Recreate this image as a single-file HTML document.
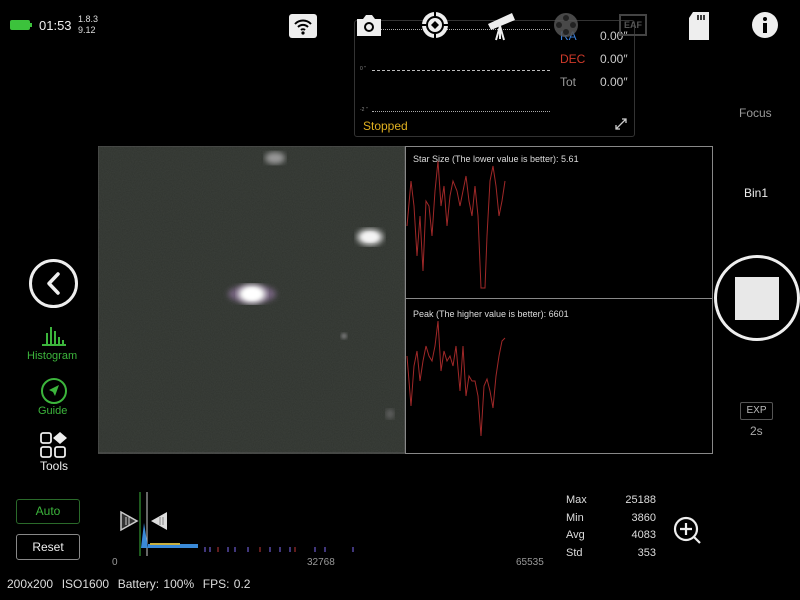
<!DOCTYPE html>
<html><head><meta charset="utf-8"><style>
*{margin:0;padding:0;box-sizing:border-box}
body{width:800px;height:600px;background:#000;overflow:hidden;position:relative;font-family:"Liberation Sans",sans-serif;color:#ddd}
.a{position:absolute}
.t{font-size:12px}
</style></head><body>
<div class="a" style="left:10px;top:20px;width:20px;height:10px;background:#3cc23c;border-radius:2px"></div>
<div class="a" style="left:30px;top:23px;width:2px;height:4px;background:#3cc23c"></div>
<div class="a" style="left:39px;top:18px;font-size:13px;color:#eee">01:53</div>
<div class="a" style="left:78px;top:14px;font-size:9px;line-height:11px;color:#ddd">1.8.3<br>9.12</div>

<div class="a" style="left:354px;top:20px;width:281px;height:117px;border:1px solid #333;border-radius:3px"></div>
<div class="a" style="left:372px;top:29px;width:178px;border-top:1px dotted #aaa"></div>
<div class="a" style="left:360px;top:66px;font-size:5px;color:#888">0 "</div>
<div class="a" style="left:372px;top:70px;width:178px;border-top:1px dashed #bbb"></div>
<div class="a" style="left:360px;top:107px;font-size:5px;color:#888">-2 "</div>
<div class="a" style="left:372px;top:111px;width:178px;border-top:1px dotted #aaa"></div>
<div class="a t" style="left:560px;top:52px;color:#d03a2a">DEC</div>
<div class="a t" style="left:560px;top:75px;color:#999">Tot</div>
<div class="a t" style="left:600px;top:29px;color:#ccc">0.00″</div>
<div class="a t" style="left:600px;top:52px;color:#ccc">0.00″</div>
<div class="a t" style="left:600px;top:75px;color:#ccc">0.00″</div>
<div class="a t" style="left:363px;top:119px;color:#e0b020">Stopped</div>
<svg class="a" style="left:614px;top:117px" width="14" height="14"><path d="M2 12L12 2M8 2h4v4M2 8v4h4" stroke="#ccc" stroke-width="1.3" fill="none"/></svg>

<svg class="a" style="left:289px;top:14px" width="28" height="24"><rect x="0" y="0" width="28" height="24" rx="3" fill="#eee"/><path d="M6 10a11 11 0 0 1 16 0M9 13a7 7 0 0 1 10 0M12 16a3 3 0 0 1 4 0" stroke="#000" stroke-width="2" fill="none"/><circle cx="14" cy="19" r="1.6"/></svg>
<svg class="a" style="left:355px;top:12px" width="28" height="26"><path d="M2 7h6l3-4h6l3 4h6v17H2z" fill="#eee"/><circle cx="14" cy="15" r="5" fill="#000"/><circle cx="14" cy="15" r="3" fill="#eee"/></svg>
<svg class="a" style="left:421px;top:11px" width="28" height="28"><circle cx="14" cy="14" r="13" fill="#eee"/><circle cx="14" cy="14" r="8" fill="none" stroke="#000" stroke-width="2"/><path d="M14 0v6M14 22v6M0 14h6M22 14h6" stroke="#000" stroke-width="2"/><path d="M14 10l4 4-4 4-4-4z" fill="#000"/></svg>
<svg class="a" style="left:484px;top:10px" width="34" height="32"><path d="M4 14L28 3l3 7-24 10z" fill="#eee"/><path d="M16 16l-4 14M16 16l4 14M16 16v13" stroke="#eee" stroke-width="2"/></svg>
<div class="a t" style="left:560px;top:29px;color:#3a7fd8">RA</div>
<svg class="a" style="left:553px;top:12px" width="26" height="26"><circle cx="13" cy="13" r="12" fill="#555" opacity=".85"/><circle cx="13" cy="6" r="3" fill="#222"/><circle cx="13" cy="20" r="3" fill="#222"/><circle cx="6" cy="13" r="3" fill="#222"/><circle cx="20" cy="13" r="3" fill="#222"/></svg>
<div class="a" style="left:619px;top:14px;width:28px;height:22px;border:2px solid #444;font-size:9px;color:#555;text-align:center;line-height:18px;font-weight:bold">EAF</div>
<svg class="a" style="left:689px;top:12px" width="22" height="28"><path d="M4 0h16v28H0V6z" fill="#eee"/><path d="M9 3v5M12 3v5M15 3v5" stroke="#000" stroke-width="1.5"/></svg>
<svg class="a" style="left:752px;top:12px" width="26" height="26"><circle cx="13" cy="13" r="13" fill="#eee"/><circle cx="13" cy="7" r="2" fill="#000"/><rect x="11" y="11" width="4" height="10" fill="#000"/></svg>

<div class="a" style="left:739px;top:106px;font-size:12px;color:#999">Focus</div>
<div class="a" style="left:744px;top:186px;font-size:12px;color:#eee">Bin1</div>

<svg class="a" style="left:98px;top:146px" width="308" height="308">
<filter id="n"><feTurbulence type="fractalNoise" baseFrequency="0.9" numOctaves="2" seed="3"/><feColorMatrix values="0 0 0 0 .15 0 0 0 0 .17 0 0 0 0 .15 0 0 0 .5 0"/></filter>
<filter id="b"><feGaussianBlur stdDeviation="3"/></filter>
<filter id="b2"><feGaussianBlur stdDeviation="1.5"/></filter>
<rect width="308" height="308" fill="#30342f"/>
<rect width="308" height="308" filter="url(#n)" opacity=".4"/>
<ellipse cx="154" cy="148" rx="24" ry="9" fill="#a080b0" filter="url(#b)" opacity=".6"/>
<ellipse cx="154" cy="148" rx="14" ry="9" fill="#eee" filter="url(#b)"/>
<ellipse cx="154" cy="148" rx="9" ry="6" fill="#fff" filter="url(#b2)"/>
<ellipse cx="272" cy="91" rx="13" ry="8" fill="#ddd" filter="url(#b)"/>
<ellipse cx="272" cy="91" rx="8" ry="5" fill="#f4f4f4" filter="url(#b2)"/>
<ellipse cx="177" cy="12" rx="10" ry="6" fill="#999" filter="url(#b)"/>
<ellipse cx="246" cy="190" rx="3" ry="3" fill="#777" filter="url(#b2)"/>
<ellipse cx="292" cy="268" rx="4" ry="5" fill="#666" filter="url(#b)"/>
<rect x="0" y="0" width="307" height="307" fill="none" stroke="#555"/>
</svg>
<div class="a" style="left:405px;top:146px;width:308px;height:308px;border:1px solid #888;background:#000"></div>
<div class="a" style="left:405px;top:298px;width:308px;border-top:1px solid #888"></div>
<div class="a" style="left:413px;top:154px;font-size:9px;color:#ddd">Star Size (The lower value is better): 5.61</div>
<div class="a" style="left:413px;top:309px;font-size:9px;color:#ddd">Peak (The higher value is better): 6601</div>
<svg class="a" style="left:405px;top:146px" width="120" height="308"><polyline fill="none" stroke="#a02828" stroke-width="1" points="2,80 6,35 9,60 12,110 15,70 18,125 21,55 24,60 27,90 30,45 33,15 36,60 39,40 42,80 45,50 48,35 52,45 55,60 58,45 61,30 64,55 67,70 70,40 73,70 76,142 80,142 82,90 85,35 88,20 91,40 94,70 97,55 100,35"/><polyline fill="none" stroke="#a02828" stroke-width="1" points="2,210 6,260 9,220 12,205 15,235 18,215 21,200 24,210 27,215 30,200 33,175 36,225 39,205 42,215 45,210 48,220 51,200 55,245 58,200 61,250 64,230 67,235 70,235 73,250 76,290 79,240 82,233 85,245 88,262 91,230 94,210 97,195 100,192"/></svg>

<div class="a" style="left:29px;top:259px;width:49px;height:49px;border:3px solid #eee;border-radius:50%"></div>
<svg class="a" style="left:29px;top:259px" width="49" height="49"><path d="M29 15l-9 9.5 9 9.5" stroke="#eee" stroke-width="3.5" fill="none" stroke-linecap="round" stroke-linejoin="round"/></svg>
<svg class="a" style="left:40px;top:325px" width="28" height="22"><path d="M2 20h24M7 20V8M11 20V2M15 20V6M19 20V12M23 20V15" stroke="#3cb53c" stroke-width="2"/></svg>
<div class="a" style="left:27px;top:350px;font-size:11px;color:#3cb53c">Histogram</div>
<svg class="a" style="left:40px;top:377px" width="28" height="28"><circle cx="14" cy="14" r="12" fill="none" stroke="#3cb53c" stroke-width="2"/><path d="M19 8l-4 11-2-4-4-2z" fill="#3cb53c"/></svg>
<div class="a" style="left:38px;top:405px;font-size:11px;color:#3cb53c">Guide</div>
<svg class="a" style="left:40px;top:432px" width="28" height="26"><rect x="1" y="1" width="10" height="10" rx="2" fill="none" stroke="#eee" stroke-width="1.8"/><path d="M20 0l7 6-7 6-7-6z" fill="#eee"/><rect x="1" y="15" width="10" height="10" rx="2" fill="none" stroke="#eee" stroke-width="1.8"/><rect x="15" y="15" width="10" height="10" rx="2" fill="none" stroke="#eee" stroke-width="1.8"/></svg>
<div class="a" style="left:40px;top:459px;font-size:12px;color:#eee">Tools</div>

<div class="a" style="left:714px;top:255px;width:86px;height:86px;border:3px solid #eee;border-radius:50%"></div>
<div class="a" style="left:735px;top:277px;width:44px;height:43px;background:#e8e8e8"></div>
<div class="a" style="left:740px;top:402px;width:33px;height:18px;border:1px solid #555;border-radius:2px;font-size:10px;color:#bbb;text-align:center;line-height:16px">EXP</div>
<div class="a" style="left:750px;top:424px;font-size:12px;color:#aaa">2s</div>

<div class="a" style="left:16px;top:499px;width:64px;height:25px;border:1px solid #2a6a2a;border-radius:3px;color:#3cb53c;font-size:12px;text-align:center;line-height:23px">Auto</div>
<div class="a" style="left:16px;top:534px;width:64px;height:26px;border:1px solid #888;border-radius:3px;color:#eee;font-size:12px;text-align:center;line-height:24px">Reset</div>
<svg class="a" style="left:110px;top:490px" width="420" height="70">
<line x1="30" y1="2" x2="30" y2="66" stroke="#3cb53c" stroke-width="1"/><line x1="37" y1="2" x2="37" y2="66" stroke="#ccc" stroke-width="1"/>
<path d="M31 58l3-25 4 25z" fill="#3a8ad8"/>
<path d="M38 56h50" stroke="#3a8ad8" stroke-width="4"/>
<path d="M40 54h30" stroke="#c8b040" stroke-width="2"/>
<path d="M95 57v5M100 57v5M118 57v5M125 57v5M138 57v5M160 57v5M170 57v5M180 57v5M205 57v5M215 57v5M243 57v5" stroke="#6a5acd" stroke-width="1.2"/>
<path d="M108 57v5M150 57v5M185 57v5" stroke="#a03030" stroke-width="1.2"/>
<path d="M11 22l16 9-16 9z" fill="#333" stroke="#ccc" stroke-width="1.5"/><path d="M16 27v8M19 27v8" stroke="#ccc"/>
<path d="M57 22l-16 9 16 9z" fill="#ddd"/><path d="M50 27v8M53 27v8" stroke="#888"/>
</svg>
<div class="a" style="left:112px;top:557px;font-size:10px;color:#999">0</div>
<div class="a" style="left:307px;top:557px;font-size:10px;color:#999">32768</div>
<div class="a" style="left:516px;top:557px;font-size:10px;color:#999">65535</div>
<div class="a" style="left:566px;top:492px;font-size:11px;line-height:17.5px;color:#ddd">Max<br>Min<br>Avg<br>Std</div>
<div class="a" style="left:610px;top:492px;width:46px;text-align:right;font-size:11px;line-height:17.5px;color:#ddd">25188<br>3860<br>4083<br>353</div>
<svg class="a" style="left:672px;top:515px" width="32" height="32"><circle cx="14" cy="14" r="11" fill="none" stroke="#eee" stroke-width="2.2"/><path d="M14 8v12M8 14h12M22 22l6 6" stroke="#eee" stroke-width="2.2"/></svg>
<div class="a" style="left:7px;top:577px;font-size:12px;color:#ddd;word-spacing:1px">200x200 &nbsp;ISO1600 &nbsp;Battery: 100% &nbsp;FPS: 0.2</div>
</body></html>
